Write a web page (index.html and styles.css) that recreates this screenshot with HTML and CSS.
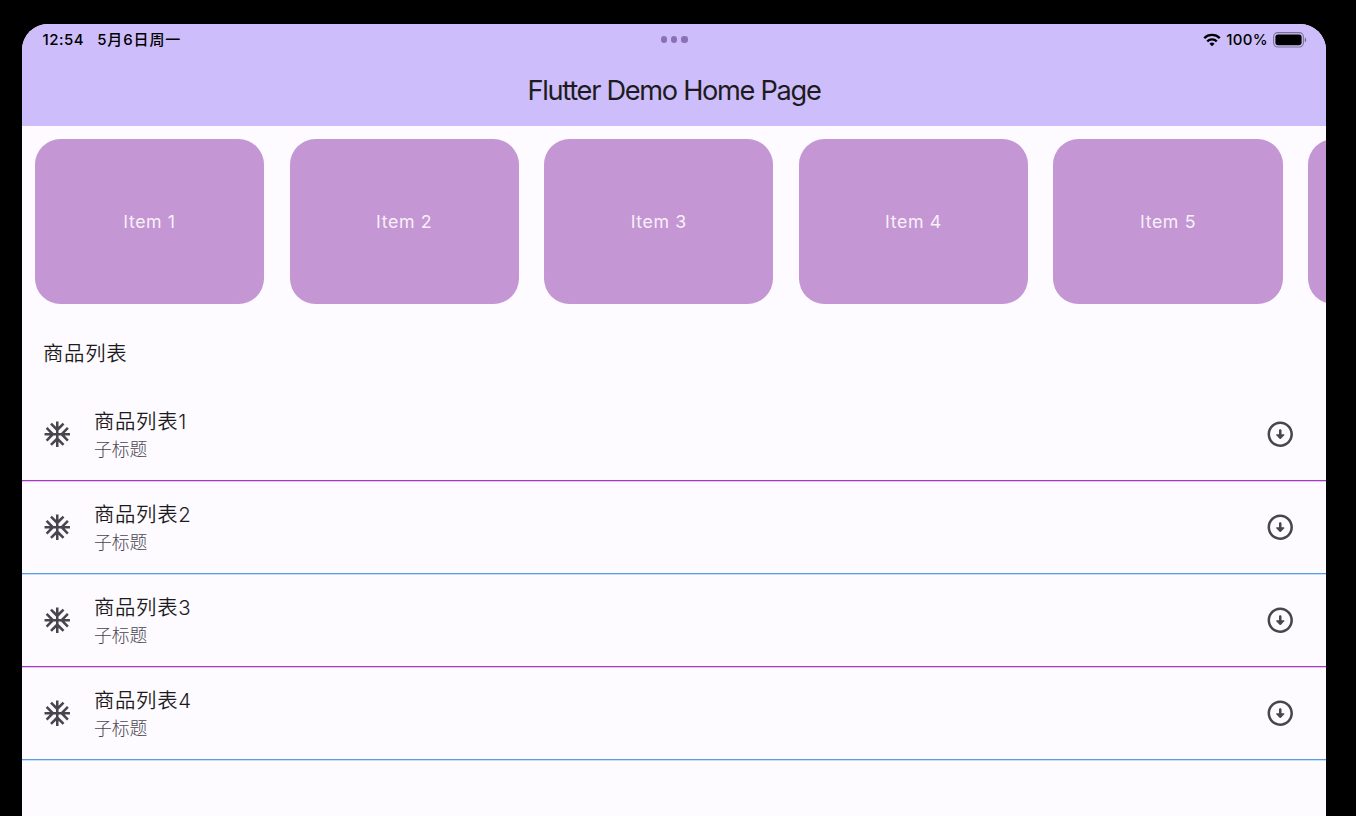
FILE: index.html
```html
<!DOCTYPE html>
<html lang="zh-CN">
<head>
<meta charset="utf-8">
<title>Flutter Demo Home Page</title>
<link rel="stylesheet" href="styles.css">
</head>
<body>
<svg class="sprite" width="0" height="0">
  <symbol id="snow" viewBox="0 0 24 24"><path d="M22 11h-4.17l3.24-3.24-1.41-1.42L15 11h-2V9l4.66-4.66-1.42-1.41L13 6.17V2h-2v4.17L7.76 2.93 6.34 4.34 11 9v2H9L4.34 6.34 2.93 7.76 6.17 11H2v2h4.17l-3.24 3.24 1.41 1.42L9 13h2v2l-4.66 4.66 1.42 1.41L11 17.83V22h2v-4.17l3.24 3.24 1.42-1.41L13 15v-2h2l4.66 4.66 1.41-1.42L17.83 13H22z"/></symbol>
  <symbol id="down" viewBox="0 0 24 24"><path d="M12 4c4.41 0 8 3.59 8 8s-3.59 8-8 8-8-3.59-8-8 3.59-8 8-8m0-2C6.48 2 2 6.48 2 12s4.48 10 10 10 10-4.48 10-10S17.52 2 12 2zm1 10V9c0-.55-.45-1-1-1s-1 .45-1 1v3H9.21c-.45 0-.67.54-.35.85l2.79 2.79c.2.2.51.2.71 0l2.79-2.79c.31-.31.09-.85-.35-.85H13z"/></symbol>
</svg>
<div class="screen">
  <header class="header">
    <div class="status">
      <div class="status-left"><span class="time">12:54</span><span class="date">5月6日周一</span></div>
      <div class="dots"><i></i><i></i><i></i></div>
      <div class="status-right">
        <svg class="wifi" width="18" height="14" viewBox="0 0 18 14" fill="none" stroke="#000" stroke-width="2.3"><path d="M1.2 5.1a11.2 11.2 0 0 1 15.6 0"/><path d="M4.2 8.3a7 7 0 0 1 9.6 0"/><path d="M9 13.2 6.5 10.7a3.6 3.6 0 0 1 5 0z" fill="#000" stroke="none"/></svg>
        <span class="percent">100%</span>
        <svg class="battery" width="34" height="16" viewBox="0 0 34 16"><rect x=".6" y=".6" width="29.8" height="14.4" rx="4.2" fill="none" stroke="#000" stroke-opacity=".4" stroke-width="1.1"/><rect x="2.4" y="2.4" width="26.2" height="10.8" rx="2.6"/><path d="M31.8 5.4c1.9.8 1.9 4 0 4.8z" fill-opacity=".45"/></svg>
      </div>
    </div>
    <h1 class="title">Flutter Demo Home Page</h1>
  </header>
  <div class="carousel">
    <div class="card">Item 1</div><div class="card">Item 2</div><div class="card">Item 3</div><div class="card">Item 4</div><div class="card">Item 5</div><div class="card"></div>
  </div>
  <h2 class="section">商品列表</h2>
  <ul class="list">
    <li class="row"><svg class="icon"><use href="#snow"/></svg><div class="text"><div class="name">商品列表1</div><div class="sub">子标题</div></div><svg class="icon"><use href="#down"/></svg></li>
    <li class="divider purple"></li>
    <li class="row"><svg class="icon"><use href="#snow"/></svg><div class="text"><div class="name">商品列表2</div><div class="sub">子标题</div></div><svg class="icon"><use href="#down"/></svg></li>
    <li class="divider blue"></li>
    <li class="row"><svg class="icon"><use href="#snow"/></svg><div class="text"><div class="name">商品列表3</div><div class="sub">子标题</div></div><svg class="icon"><use href="#down"/></svg></li>
    <li class="divider purple"></li>
    <li class="row"><svg class="icon"><use href="#snow"/></svg><div class="text"><div class="name">商品列表4</div><div class="sub">子标题</div></div><svg class="icon"><use href="#down"/></svg></li>
    <li class="divider blue"></li>
  </ul>
</div>
</body>
</html>
```
FILE: styles.css
```css
* { box-sizing: border-box; }
body {
  margin: 0;
  height: 816px;
  padding: 24px 30px 0 22px;
  overflow: hidden;
  background: #000;
  font-family: Inter, "Noto Sans CJK SC", sans-serif;
  color: #1d1b20;
}
.sprite { display: none; }
.screen {
  height: 792px;
  overflow: hidden;
  background: #fdfbff;
  border-radius: 26px 26px 0 0;
}
.header { height: 101.5px; background: #cdbdfb; }
.status {
  display: grid;
  grid-template-columns: 1fr auto 1fr;
  align-items: center;
  height: 31px;
  padding: 0 19px 0 20.5px;
  font-size: 15px;
  font-weight: 500;
  line-height: 20px;
  color: #000;
}
.status-left { display: flex; gap: 13px; }
.time { letter-spacing: .5px; }
.date { letter-spacing: .9px; }
.dots { display: flex; gap: 4px; margin-right: 1px; }
.dots i { width: 6.4px; height: 6.4px; border-radius: 50%; background: #8a70b7; }
.status-right { display: flex; align-items: center; justify-content: flex-end; }
.percent { margin: 0 5px; letter-spacing: .3px; }
.title {
  margin: 0;
  padding-top: 16px;
  text-align: center;
  font-size: 27.2px;
  font-weight: 390;
  line-height: 40px;
  letter-spacing: -1.3px;
}
.carousel { display: flex; gap: 25.46px; padding: 13px 0 0 12.9px; }
.card {
  display: flex;
  flex: none;
  align-items: center;
  justify-content: center;
  width: 229.2px;
  height: 165.5px;
  border-radius: 25.5px;
  background: #c596d4;
  color: rgba(255, 255, 255, .88);
  font-size: 17.8px;
  font-weight: 400;
  letter-spacing: .6px;
}
.section {
  margin: 0;
  padding: 33px 0 0 21px;
  height: 85px;
  font-size: 20.4px;
  font-weight: 350;
  line-height: 34px;
  letter-spacing: .7px;
}
.list { margin: 0; padding: 0; list-style: none; }
.row {
  display: flex;
  align-items: center;
  height: 91px;
  padding: 0 31px 0 20.4px;
}
.divider { height: 2px; }
.purple { background: linear-gradient(#a43abd 50%, #e7c4ee 50%); }
.blue { background: linear-gradient(#5a9be2 50%, #c5e0fa 50%); }
.icon { flex: none; width: 30.5px; height: 30.5px; fill: #49454f; }
.text { flex: 1; padding-left: 21px; }
.name { font-size: 20.4px; font-weight: 350; line-height: 30px; letter-spacing: .7px; }
.sub { font-size: 17.8px; font-weight: 300; line-height: 26px; color: #49454f; }
```
